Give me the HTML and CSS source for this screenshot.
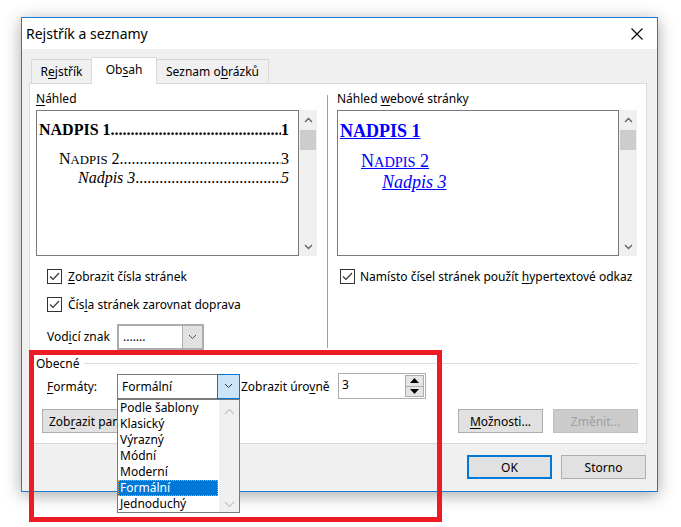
FILE: index.html
```html
<!DOCTYPE html>
<html lang="cs">
<head>
    <meta charset="UTF-8">
    <title>Rejstřík a seznamy</title>
    <link rel="stylesheet" href="styles.css">
</head>
<body>
<div class="dialog">
    <div class="titlebar">
        <span class="title">Rejstřík a seznamy</span>
        <svg class="close" width="12" height="12" viewBox="0 0 12 12"><path d="M0.5 0.5L11.5 11.5M11.5 0.5L0.5 11.5" stroke="#000" stroke-width="1.1" fill="none"/></svg>
    </div>
    <div class="client">
        <div class="tabs">
            <div class="tab t1">R<u>e</u>jstřík</div>
            <div class="tab t2 active">Ob<u>s</u>ah</div>
            <div class="tab t3">Seznam o<u>b</u>rázků</div>
        </div>
        <div class="panel">
            <div class="top">
                <div class="col-left">
                    <div class="label"><u>N</u>áhled</div>
                    <div class="preview">
                        <div class="paper print">
                            <div class="toc l1"><span>NADPIS 1</span><span class="lead">........................................................................</span><span>1</span></div>
                            <div class="toc l2"><span>N<span class="sc">ADPIS</span> 2</span><span class="lead">........................................................................</span><span>3</span></div>
                            <div class="toc l3"><span>Nadpis 3</span><span class="lead">........................................................................</span><span>5</span></div>
                        </div>
                        <div class="vscroll">
                            <svg width="9" height="6" viewBox="0 0 9 6"><path d="M1 5L4.5 1.5L8 5" stroke="#606060" stroke-width="1.3" fill="none"/></svg>
                            <div class="thumb"></div>
                            <svg class="down" width="9" height="6" viewBox="0 0 9 6"><path d="M1 1L4.5 4.5L8 1" stroke="#606060" stroke-width="1.3" fill="none"/></svg>
                        </div>
                    </div>
                    <div class="check-row first">
                        <span class="chk"><svg width="13" height="13" viewBox="0 0 13 13"><path d="M2 6.5L5 9.5L11 3" stroke="#333" stroke-width="1.2" fill="none"/></svg></span>
                        <span><u>Z</u>obrazit čísla stránek</span>
                    </div>
                    <div class="check-row">
                        <span class="chk"><svg width="13" height="13" viewBox="0 0 13 13"><path d="M2 6.5L5 9.5L11 3" stroke="#333" stroke-width="1.2" fill="none"/></svg></span>
                        <span>Čís<u>l</u>a stránek zarovnat doprava</span>
                    </div>
                    <div class="field-row leader-row">
                        <span class="field-label">Vod<u>i</u>cí znak</span>
                        <div class="combo leader">
                            <span class="value">.......</span>
                            <span class="drop"><svg width="9" height="6" viewBox="0 0 9 6"><path d="M1 1L4.5 4.5L8 1" stroke="#555" stroke-width="1" fill="none"/></svg></span>
                        </div>
                    </div>
                </div>
                <div class="sep"></div>
                <div class="col-right">
                    <div class="label">Náhled <u>w</u>ebové stránky</div>
                    <div class="preview">
                        <div class="paper web">
                            <div class="web-line w1"><a>NADPIS 1</a></div>
                            <div class="web-line w2"><a>N<span class="sc">ADPIS</span> 2</a></div>
                            <div class="web-line w3"><a>Nadpis 3</a></div>
                        </div>
                        <div class="vscroll">
                            <svg width="9" height="6" viewBox="0 0 9 6"><path d="M1 5L4.5 1.5L8 5" stroke="#606060" stroke-width="1.3" fill="none"/></svg>
                            <div class="thumb"></div>
                            <svg class="down" width="9" height="6" viewBox="0 0 9 6"><path d="M1 1L4.5 4.5L8 1" stroke="#606060" stroke-width="1.3" fill="none"/></svg>
                        </div>
                    </div>
                    <div class="check-row first right">
                        <span class="chk"><svg width="13" height="13" viewBox="0 0 13 13"><path d="M2 6.5L5 9.5L11 3" stroke="#333" stroke-width="1.2" fill="none"/></svg></span>
                        <span>Namísto čísel stránek použít <u>h</u>ypertextové odkaz</span>
                    </div>
                </div>
            </div>

            <div class="group-head"><span>Obecné</span><span class="line"></span></div>
            <div class="field-row formats-row">
                <span class="field-label"><u>F</u>ormáty:</span>
                <div class="combo formats">
                    <span class="value">Formální</span>
                    <span class="drop"><svg width="9" height="6" viewBox="0 0 9 6"><path d="M1 1L4.5 4.5L8 1" stroke="#333" stroke-width="1" fill="none"/></svg></span>
                    <ul class="listbox">
                        <li>Podle šablony</li>
                        <li>Klasický</li>
                        <li>Výrazný</li>
                        <li>Módní</li>
                        <li>Moderní</li>
                        <li class="selected">Formální</li>
                        <li>Jednoduchý</li>
                        <li class="list-scroll">
                            <svg width="11" height="7" viewBox="0 0 11 7"><path d="M1 6L5.5 1.5L10 6" stroke="#c8c8c8" stroke-width="1.3" fill="none"/></svg>
                            <svg width="11" height="7" viewBox="0 0 11 7"><path d="M1 1L5.5 5.5L10 1" stroke="#c8c8c8" stroke-width="1.3" fill="none"/></svg>
                        </li>
                    </ul>
                </div>
                <span class="levels-label">Zobrazit úro<u>v</u>ně</span>
                <div class="spin">
                    <span class="value">3</span>
                    <div class="spin-btns">
                        <span><svg width="9" height="5" viewBox="0 0 9 5"><path d="M0 5L4.5 0L9 5Z" fill="#000"/></svg></span>
                        <span><svg width="9" height="5" viewBox="0 0 9 5"><path d="M0 0L4.5 5L9 0Z" fill="#000"/></svg></span>
                    </div>
                </div>
            </div>
            <div class="btn-row">
                <button class="btn outline-btn">Zob<u>r</u>azit panel nástrojů Osnova</button>
                <button class="btn options"><u>M</u>ožnosti...</button>
                <button class="btn" disabled>Změnit...</button>
            </div>
        </div>
        <div class="footer">
            <button class="btn default">OK</button>
            <button class="btn">Storno</button>
        </div>
    </div>
</div>
<div class="markup"></div>
</body>
</html>
```

FILE: styles.css
```css
* {
    box-sizing: border-box;
}
body {
    margin: 0;
    width: 681px;
    height: 527px;
    overflow: hidden;
    position: relative;
    background: #fff;
    font-family: "Noto Sans", sans-serif;
    font-size: 12px;
    color: #000;
}
u {
    text-decoration: underline;
    text-underline-offset: 2px;
}
.dialog {
    margin: 17px 0 0 21px;
    width: 637px;
    height: 475px;
    border: 1px solid #1b7bd0;
    background: #f0f0f0;
    box-shadow: 0 3px 16px rgba(0, 0, 0, 0.35);
}
.titlebar {
    height: 31px;
    background: #fff;
    display: flex;
    align-items: center;
    justify-content: space-between;
    padding: 0 14px 0 4px;
}
.title {
    font-size: 14px;
}
.client {
    padding: 8px 10px 0 7px;
}
.tabs {
    display: flex;
    align-items: flex-end;
    height: 26px;
    padding-left: 2px;
}
.tab {
    height: 24px;
    border: 1px solid #d9d9d9;
    border-bottom: none;
    background: #f0f0f0;
    display: flex;
    align-items: center;
    justify-content: center;
    padding-bottom: 1px;
}
.tab + .tab {
    border-left: none;
}
.tab.t1 { width: 61px; }
.tab.t2 { width: 65px; }
.tab.t3 { width: 112px; }
.tab.active {
    height: 27px;
    margin-bottom: -1px;
    background: #fff;
    position: relative;
    z-index: 1;
    padding-bottom: 3px;
}
.panel {
    width: 618px;
    height: 361px;
    border: 1px solid #d9d9d9;
    background: #fff;
    padding: 7px 8px 0 6px;
}
.top {
    display: flex;
    height: 258px;
}
.col-left {
    width: 291px;
}
.sep {
    width: 1px;
    background: #a0a0a0;
    margin: 4px 0 1px;
}
.col-right {
    padding-left: 9px;
    width: 310px;
}
.label {
    height: 16px;
    line-height: 16px;
}
.preview {
    display: flex;
    margin-top: 3px;
    height: 146px;
}
.col-left .preview {
    width: 281px;
}
.col-right .preview {
    width: 300px;
}
.paper {
    flex: 1;
    min-width: 0;
    border: 1px solid #7a7a7a;
    background: #fff;
    font-family: "Liberation Serif", serif;
    font-size: 16px;
    line-height: 18px;
    white-space: nowrap;
    overflow: hidden;
}
.sc {
    font-size: 0.8em;
}
.print {
    padding: 10px 9px 0 2px;
}
.vscroll {
    width: 18px;
    flex-shrink: 0;
    background: #f0f0f0;
    display: flex;
    flex-direction: column;
    align-items: center;
    padding-top: 7px;
}
.vscroll .thumb {
    width: 16px;
    height: 20px;
    background: #cdcdcd;
    margin-top: 7px;
}
.vscroll .down {
    margin-top: auto;
    margin-bottom: 6px;
}
.toc {
    display: flex;
}
.toc .lead {
    flex: 1;
    min-width: 0;
    overflow: hidden;
}
.toc.l1 {
    font-weight: bold;
    margin-bottom: 11px;
}
.toc.l2 {
    padding-left: 20px;
}
.toc.l3 {
    padding-left: 39px;
    font-style: italic;
}
.toc.l3 .lead {
    font-style: normal;
}
.web {
    padding: 10px 4px 0 2px;
    font-size: 18px;
    line-height: 20px;
}
.web a {
    color: #0000ff;
    text-decoration: underline;
}
.web-line.w1 {
    font-weight: bold;
}
.web-line.w2 {
    margin-top: 10px;
    padding-left: 21px;
}
.web-line.w3 {
    padding-left: 42px;
    font-style: italic;
}
.check-row {
    display: flex;
    align-items: center;
    height: 28px;
    padding-left: 11px;
    gap: 6px;
}
.check-row.first {
    margin-top: 6px;
}
.check-row.right {
    padding-left: 3px;
    gap: 5px;
    white-space: nowrap;
}
.chk {
    width: 15px;
    height: 15px;
    border: 1px solid #333;
    background: #fff;
    display: flex;
    align-items: center;
    justify-content: center;
}
.field-row {
    display: flex;
    align-items: center;
    padding-left: 11px;
}
.leader-row {
    margin-top: 6px;
    height: 25px;
}
.field-label {
    width: 70px;
}
.combo {
    display: flex;
    background: #fff;
    position: relative;
}
.combo .value {
    flex: 1;
    padding-left: 4px;
    display: flex;
    align-items: center;
}
.combo .drop {
    display: flex;
    align-items: center;
    justify-content: center;
}
.combo.leader {
    width: 87px;
    height: 26px;
    border: 2px solid #adadad;
}
.combo.leader .drop {
    width: 20px;
    background: #e1e1e1;
    border-left: 1px solid #adadad;
}
.group-head {
    display: flex;
    align-items: center;
    margin-top: 6px;
    height: 16px;
}
.group-head .line {
    flex: 1;
    height: 1px;
    background: #dcdcdc;
    margin-left: 5px;
}
.formats-row {
    margin-top: 2px;
    height: 26px;
}
.combo.formats {
    width: 123px;
    height: 25px;
    border: 1px solid #7a7a7a;
    border-right: none;
}
.combo.formats .drop {
    width: 23px;
    margin: -1px 0;
    background: #cce4f7;
    border: 1px solid #0078d7;
}
.listbox {
    position: absolute;
    left: -1px;
    top: 24px;
    width: 123px;
    height: 114px;
    margin: 0;
    padding: 0 21px 0 0;
    list-style: none;
    border: 1px solid #7a7a7a;
    background: #fff;
    z-index: 2;
}
.listbox li {
    height: 16px;
    line-height: 16px;
    padding-left: 2px;
}
.listbox li.selected {
    background: #0078d7;
    color: #fff;
    outline: 1px dotted #f0a030;
    outline-offset: -1px;
}
.listbox li.list-scroll {
    position: absolute;
    top: 0;
    right: 0;
    width: 20px;
    height: 112px;
    padding: 8px 0 4px;
    background: #f0f0f0;
    display: flex;
    flex-direction: column;
    align-items: center;
    justify-content: space-between;
}
.levels-label {
    width: 98px;
    padding-left: 1px;
    white-space: nowrap;
}
.spin {
    width: 88px;
    height: 26px;
    border: 1px solid #adadad;
    display: flex;
    background: #fff;
}
.spin .value {
    flex: 1;
    padding-left: 3px;
    line-height: 22px;
}
.spin-btns {
    width: 20px;
    display: flex;
    flex-direction: column;
    padding: 1px 1px 1px 0;
}
.spin-btns span {
    flex: 1;
    background: #e5e5e5;
    border: 1px solid #adadad;
    display: flex;
    align-items: center;
    justify-content: center;
}
.spin-btns span + span {
    border-top: none;
}
.btn-row {
    display: flex;
    gap: 10px;
    margin-top: 10px;
    height: 24px;
}
.btn {
    height: 24px;
    width: 85px;
    border: 1px solid #adadad;
    background: #e1e1e1;
    font-family: "Noto Sans", sans-serif;
    font-size: 12px;
    color: #000;
    padding: 0;
}
.btn:disabled {
    background: #cccccc;
    border-color: #bfbfbf;
    color: #a0a0a0;
}
.btn.outline-btn {
    width: 176px;
    margin-left: 6px;
    padding-left: 6px;
    text-align: left;
    white-space: nowrap;
    overflow: hidden;
}
.btn.options {
    margin-left: auto;
}
.footer {
    display: flex;
    justify-content: flex-end;
    gap: 9px;
    margin-top: 11px;
    padding-right: 1px;
}
.btn.default {
    border: 2px solid #0078d7;
}
.markup {
    position: absolute;
    left: 29px;
    top: 350px;
    width: 413px;
    height: 172px;
    border: 5px solid #ed1c24;
    z-index: 5;
}
```
